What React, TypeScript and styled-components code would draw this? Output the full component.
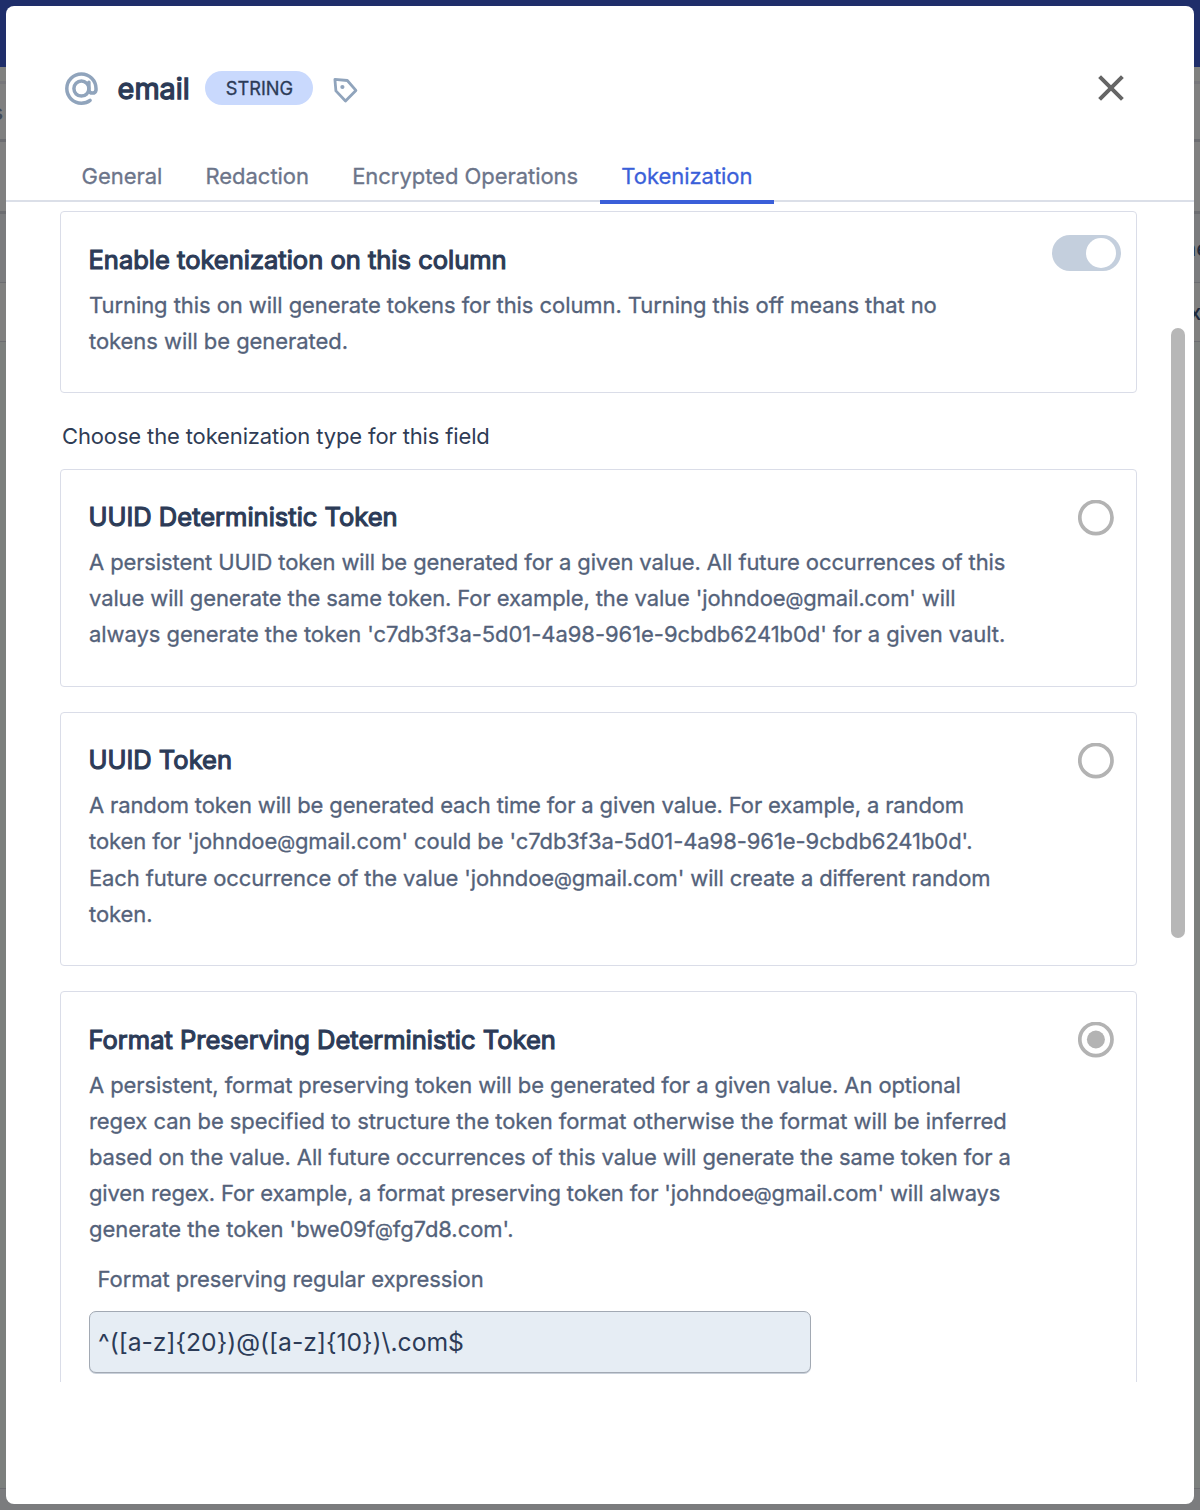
import React from "react";
import styled, { createGlobalStyle, css } from "styled-components";

const GlobalStyle = createGlobalStyle`
  *, *::before, *::after { box-sizing: border-box; }
  body { margin: 0; font-family: Inter, "Liberation Sans", sans-serif; }
  h1, h2, p { margin: 0; }
`;

const Screen = styled.div`
  display: grid;
  grid-template: 1510px / 1200px;
  overflow: hidden;
`;

/* Dimmed page behind the dialog */
const Backdrop = styled.div`
  grid-area: 1 / 1;
  display: flex;
  flex-direction: column;
  background: #7b7c7e;
`;

const BackdropRow = styled.div<{ $height: number; $fill: string; $line?: number; $lineColor?: string }>`
  display: flex;
  justify-content: space-between;
  align-items: center;
  flex: none;
  height: ${p => p.$height}px;
  background: ${p => p.$fill};
  border-bottom: ${p => p.$line ?? 0}px solid ${p => p.$lineColor ?? "#6c6d71"};
  color: #1f2a3b;
  font-size: 22px;
  font-weight: 500;
  overflow: hidden;
`;

const EdgeLeft = styled.span`
  width: 3px;
  display: flex;
  justify-content: flex-end;
  color: #414957;
  font-weight: 600;
`;

const EdgeRight = styled.span<{ $width: number }>`
  width: ${p => p.$width}px;
  margin-left: auto;
  white-space: nowrap;
`;

const Dialog = styled.section`
  grid-area: 1 / 1;
  margin: 6px;
  display: flex;
  flex-direction: column;
  background: #fff;
  border-radius: 8px;
  overflow: hidden;
`;

const Header = styled.header`
  height: 142px;
  padding: 23px 70px 0 58px;
  display: flex;
  align-items: center;
  flex: none;
`;

const Title = styled.h1`
  width: 73px;
  margin: 1px 0 0 18.6px;
  font-size: 28.8px;
  line-height: 36px;
  font-weight: 400;
  -webkit-text-stroke: 1.3px #2c3b57;
  color: #2c3b57;
`;

const Pill = styled.span`
  width: 108px;
  height: 34px;
  margin: -1px 0 0 14.4px;
  padding-left: 1px;
  border-radius: 17px;
  display: flex;
  align-items: center;
  justify-content: center;
  background: #c9d9fd;
  color: #2c3b57;
  font-size: 18.2px;
  -webkit-text-stroke: 0.3px #2c3b57;
`;

const IconButton = styled.button<{ $end?: boolean }>`
  display: flex;
  padding: 0;
  border: 0;
  background: none;
  margin: ${p => (p.$end ? "-1px 0 0 auto" : "2px 0 0 19px")};
`;

const Tabs = styled.nav`
  flex: none;
  height: 54px;
  padding-left: 54px;
  display: flex;
  border-bottom: 2px solid #dbdfe8;
`;

const Tab = styled.button<{ $active?: boolean }>`
  height: 56px;
  flex: none;
  padding: 3px 21.6px 0;
  border: 0;
  border-bottom: 4px solid ${p => (p.$active ? "#3a5fd9" : "transparent")};
  background: none;
  color: ${p => (p.$active ? "#3a5fd9" : "#6c758a")};
  font: 400 22px/36px Inter, sans-serif;
  letter-spacing: -0.04px;
  -webkit-text-stroke: 0.3px ${p => (p.$active ? "#3a5fd9" : "#6c758a")};
  position: relative;
`;

const Body = styled.div`
  flex: none;
  height: 1180px;
  padding: 9px 9px 0 54px;
  display: flex;
  justify-content: space-between;
  overflow: hidden;
`;

const Column = styled.div`
  width: 1077px;
`;

const ScrollThumb = styled.div`
  width: 14px;
  height: 610px;
  margin-top: 117px;
  border-radius: 7px;
  background: #b7b7b7;
`;

const Card = styled.article<{ $height: number }>`
  height: ${p => p.$height}px;
  margin-bottom: 25px;
  padding: 30px 22px 0 28px;
  display: flex;
  justify-content: space-between;
  align-items: flex-start;
  border: 1px solid #dadde8;
  border-radius: 4px;
`;

const Content = styled.div<{ $raised?: boolean }>`
  margin-top: ${p => (p.$raised ? -1 : 0)}px;
`;

const CardTitle = styled.h2`
  margin: 0 0 9px -0.5px;
  font-size: 25.5px;
  line-height: 36px;
  font-weight: 400;
  -webkit-text-stroke: 1.15px #2c3b57;
  color: #2c3b57;
`;

const bodyText = css`
  font-size: 22px;
  line-height: 36.1px;
  letter-spacing: -0.07px;
  font-weight: 400;
`;

const CardText = styled.p<{ $leading?: number }>`
  ${bodyText}
  line-height: ${p => p.$leading ?? 36.1}px;
  color: #54627a;
  -webkit-text-stroke: 0.3px #54627a;
`;

const TextLine = styled.span<{ $tracking: number }>`
  display: block;
  white-space: nowrap;
  letter-spacing: ${p => p.$tracking}px;
`;

const AtSign = styled.span`
  font-size: 0.84em;
  line-height: 1;
`;

const SectionLabel = styled.p`
  ${bodyText}
  letter-spacing: -0.14px;
  line-height: 36px;
  margin: 0 0 15px 2px;
  color: #2f3c55;
`;

const FieldLabel = styled.label`
  ${bodyText}
  display: block;
  margin: 14px 0 13px 8.5px;
  letter-spacing: -0.09px;
  color: #54627a;
  -webkit-text-stroke: 0.3px #54627a;
`;

const RegexInput = styled.input`
  display: block;
  width: 722px;
  height: 62px;
  padding: 0 8px;
  border: 1px solid #a2a9b3;
  border-radius: 7px;
  box-shadow: 0 1px 0 #c9d0da;
  background: #e6edf4;
  color: #2c3b57;
  font: 400 24.7px Inter, sans-serif;
  outline: none;
`;

const Toggle = styled.span`
  width: 69px;
  height: 36px;
  margin: -7px -7px 0 0;
  padding-right: 5px;
  border-radius: 18px;
  display: flex;
  align-items: center;
  justify-content: flex-end;
  background: #c4cfdd;
`;

const Knob = styled.span`
  width: 30px;
  height: 30px;
  border-radius: 50%;
  background: #fff;
`;

const Radio = ({ checked }: { checked?: boolean }) => (
  <svg width="36" height="36" viewBox="0 0 36 36">
    <circle cx="17.9" cy="17.5" r="16.1" fill="none" stroke="#b3b3b3" strokeWidth="3.7" />
    {checked && <circle cx="17.9" cy="17.5" r="9" fill="#b3b3b3" />}
  </svg>
);

const AtIcon = () => (
  <svg width="35" height="35" viewBox="0 0 35 35" fill="none" stroke="#90a4bc" strokeWidth="3.5" strokeLinecap="round">
    <circle cx="17.4" cy="17.6" r="7.5" />
    <path d="M24.9 11.2v7.9a3.6 3.6 0 0 0 7.1 0v-1.5A14.6 14.6 0 1 0 17.4 32.2c3.4 0 6.5-1 8.7-2.8" />
  </svg>
);

const TagIcon = () => (
  <svg width="28" height="28" viewBox="0 0 28 28" fill="none" stroke="#90a4bc" strokeWidth="2.8" strokeLinejoin="round">
    <path d="M2.9 3.4l12.4 1.1 8.6 9.9-10.4 10.6L3.9 14.9z" />
    <circle cx="10.4" cy="11" r="2.1" fill="#90a4bc" stroke="none" />
  </svg>
);

const CloseIcon = () => (
  <svg width="26" height="26" viewBox="0 0 26 26" fill="none" stroke="#666" strokeWidth="4">
    <path d="M1.6 1.6l22.8 22.8M24.4 1.6L1.6 24.4" />
  </svg>
);

interface Line {
  text: string;
  tracking: number;
}

interface Option {
  title: string;
  lines: Line[];
  height: number;
  raised?: boolean;
  leading?: number;
  checked?: boolean;
  pattern?: string;
}

const enableLines: Line[] = [
  { text: "Turning this on will generate tokens for this column. Turning this off means that no", tracking: -0.07 },
  { text: "tokens will be generated.", tracking: -0.06 },
];

const options: Option[] = [
  {
    title: "UUID Deterministic Token",
    height: 218,
    raised: true,
    lines: [
      { text: "A persistent UUID token will be generated for a given value. All future occurrences of this", tracking: -0.115 },
      { text: "value will generate the same token. For example, the value 'johndoe@gmail.com' will", tracking: -0.115 },
      { text: "always generate the token 'c7db3f3a-5d01-4a98-961e-9cbdb6241b0d' for a given vault.", tracking: -0.05 },
    ],
  },
  {
    title: "UUID Token",
    height: 254,
    raised: true,
    leading: 36.4,
    lines: [
      { text: "A random token will be generated each time for a given value. For example, a random", tracking: -0.14 },
      { text: "token for 'johndoe@gmail.com' could be 'c7db3f3a-5d01-4a98-961e-9cbdb6241b0d'.", tracking: -0.075 },
      { text: "Each future occurrence of the value 'johndoe@gmail.com' will create a different random", tracking: -0.12 },
      { text: "token.", tracking: -0.06 },
    ],
  },
  {
    title: "Format Preserving Deterministic Token",
    height: 420,
    checked: true,
    pattern: "^([a-z]{20})@([a-z]{10})\\.com$",
    lines: [
      { text: "A persistent, format preserving token will be generated for a given value. An optional", tracking: -0.095 },
      { text: "regex can be specified to structure the token format otherwise the format will be inferred", tracking: -0.06 },
      { text: "based on the value. All future occurrences of this value will generate the same token for a", tracking: -0.11 },
      { text: "given regex. For example, a format preserving token for 'johndoe@gmail.com' will always", tracking: -0.14 },
      { text: "generate the token 'bwe09f@fg7d8.com'.", tracking: -0.06 },
    ],
  },
];

const Lines = ({ lines }: { lines: Line[] }) => (
  <>
    {lines.map(({ text, tracking }) => {
      const [before, after] = text.split("@");
      return (
        <TextLine key={text} $tracking={tracking}>
          {before}
          {after !== undefined && (
            <>
              <AtSign>@</AtSign>
              {after}
            </>
          )}
        </TextLine>
      );
    })}
  </>
);

export default function App() {
  return (
    <Screen>
      <GlobalStyle />
      <Backdrop>
        <BackdropRow $height={67} $fill="#1f2e6a" />
        <BackdropRow $height={17} $fill="#80817f" $line={3} $lineColor="#77777b" />
        <BackdropRow $height={58} $fill="#808080" $line={3}>
          <EdgeLeft>s</EdgeLeft>
        </BackdropRow>
        <BackdropRow $height={72} $fill="#808080" $line={3} />
        <BackdropRow $height={69} $fill="#7b7c7e" $line={1}>
          <EdgeRight $width={17}>ne</EdgeRight>
        </BackdropRow>
        <BackdropRow $height={59} $fill="#80807f" $line={1}>
          <EdgeRight $width={11}>x</EdgeRight>
        </BackdropRow>
        <BackdropRow $height={1147} $fill="#7c7f7d" $line={1} />
      </Backdrop>
      <Dialog>
        <Header>
          <AtIcon />
          <Title>email</Title>
          <Pill>STRING</Pill>
          <IconButton aria-label="Tag">
            <TagIcon />
          </IconButton>
          <IconButton $end aria-label="Close">
            <CloseIcon />
          </IconButton>
        </Header>
        <Tabs>
          <Tab>General</Tab>
          <Tab>Redaction</Tab>
          <Tab>Encrypted Operations</Tab>
          <Tab $active>Tokenization</Tab>
        </Tabs>
        <Body>
          <Column>
            <Card $height={182}>
              <Content>
                <CardTitle>Enable tokenization on this column</CardTitle>
                <CardText>
                  <Lines lines={enableLines} />
                </CardText>
              </Content>
              <Toggle>
                <Knob />
              </Toggle>
            </Card>
            <SectionLabel>Choose the tokenization type for this field</SectionLabel>
            {options.map(option => (
              <Card key={option.title} $height={option.height}>
                <Content $raised={option.raised}>
                  <CardTitle>{option.title}</CardTitle>
                  <CardText $leading={option.leading}>
                    <Lines lines={option.lines} />
                  </CardText>
                  {option.pattern && (
                    <>
                      <FieldLabel htmlFor="pattern">Format preserving regular expression</FieldLabel>
                      <RegexInput id="pattern" readOnly value={option.pattern} />
                    </>
                  )}
                </Content>
                <Radio checked={option.checked} />
              </Card>
            ))}
          </Column>
          <ScrollThumb />
        </Body>
      </Dialog>
    </Screen>
  );
}
